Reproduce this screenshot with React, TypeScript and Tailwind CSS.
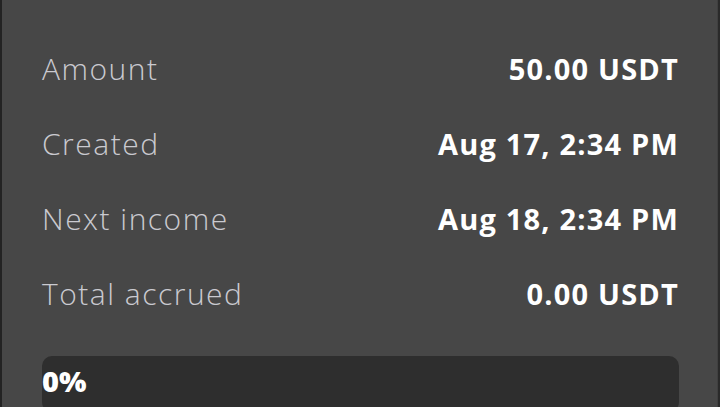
const rows = [
  { label: "Amount", value: "50.00 USDT" },
  { label: "Created", value: "Aug 17, 2:34 PM" },
  { label: "Next income", value: "Aug 18, 2:34 PM" },
  { label: "Total accrued", value: "0.00 USDT" },
];

export default function App() {
  return (
    <div className="flex h-[407px] w-[720px] overflow-hidden bg-[#474747] font-['Open_Sans',sans-serif]">
      <div className="w-[2px] shrink-0 bg-[#232323]" />
      {/* Details panel */}
      <div className="flex flex-1 flex-col border-r border-[#404040] pl-[40px] pr-[38px] pt-[31px]">
        {rows.map((row) => (
          <div key={row.label} className="flex h-[75px] shrink-0 items-center justify-between">
            <span className="text-[30px] font-light tracking-[1.5px] text-[#cacad0]">{row.label}</span>
            <span className="text-[29px] font-bold tracking-[1.2px] text-white">{row.value}</span>
          </div>
        ))}
        <div className="mt-[25px] flex h-[56px] shrink-0 items-center rounded-[10px] bg-[#2e2e2e] pb-[7px]">
          <span className="text-[29px] font-extrabold text-white">0%</span>
        </div>
      </div>
      <div className="w-[2px] shrink-0 bg-[#2a2a2a]" />
    </div>
  );
}
